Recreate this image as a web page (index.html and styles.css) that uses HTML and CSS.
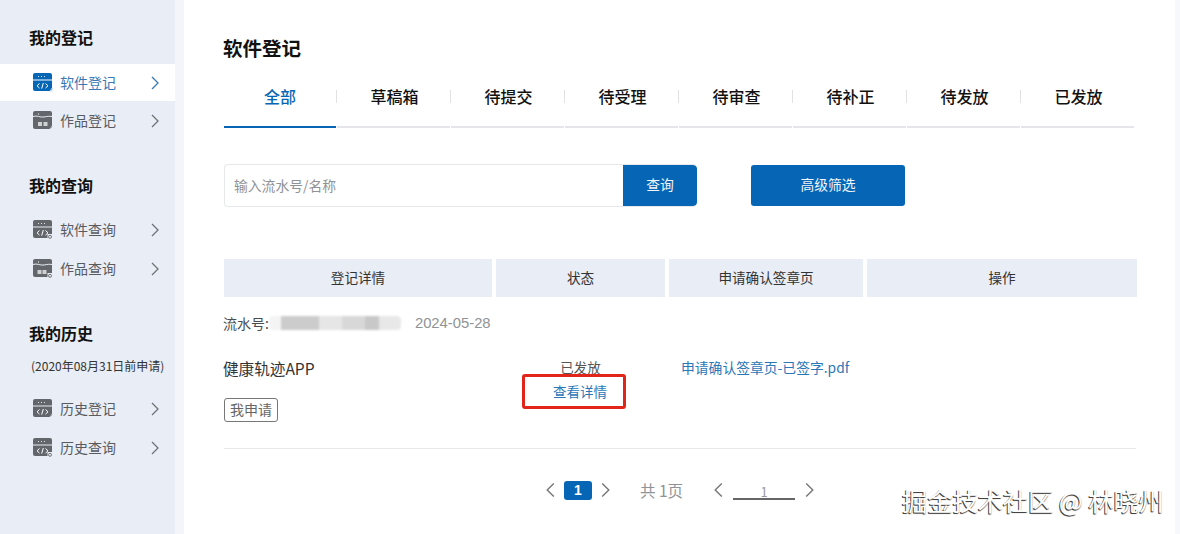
FILE: index.html
```html
<!DOCTYPE html>
<html lang="zh">
<head>
<meta charset="utf-8">
<title>软件登记</title>
<link rel="stylesheet" href="styles.css">
</head>
<body>
<svg class="defs" width="0" height="0" aria-hidden="true">
  <symbol id="win-code" viewBox="0 0 20 19">
    <path d="M2 0h15a2 2 0 0 1 2 2v4.500H0V2a2 2 0 0 1 2-2z" fill="currentColor"/>
    <path d="M0 7.500h19V16a2 2 0 0 1-2 2H2a2 2 0 0 1-2-2z" fill="currentColor"/>
    <path d="M5 3.500h1M8 3.500h1M11 3.500h1" stroke="#fff" stroke-width="1" opacity=".8"/>
    <path d="M6.500 10.500 4 12.800l2.500 2.300M12.500 10.500l2.500 2.300-2.500 2.300M10.300 10l-1.600 5.600" fill="none" stroke="#fff" stroke-width="1"/>
    <path d="M15.500 19.500h4.500V15h-1.500z" fill="#e8edf6"/>
    <path d="M17 17.500l1.800-1.800" stroke="currentColor" stroke-width="1"/>
  </symbol>
  <symbol id="win-code-q" viewBox="0 0 20 19">
    <path d="M2 0h15a2 2 0 0 1 2 2v4.500H0V2a2 2 0 0 1 2-2z" fill="currentColor"/>
    <path d="M0 7.500h19V16a2 2 0 0 1-2 2H2a2 2 0 0 1-2-2z" fill="currentColor"/>
    <path d="M5 3.500h1M8 3.500h1M11 3.500h1" stroke="#fff" stroke-width="1" opacity=".8"/>
    <path d="M6.500 10.500 4 12.800l2.500 2.300M12.500 10.500l2.500 2.300-2.500 2.300M10.300 10l-1.600 5.600" fill="none" stroke="#fff" stroke-width="1"/>
    <path d="M14.500 19.500H20V14h-5.500z" fill="#e8edf6"/>
    <circle cx="17" cy="16.800" r="1.500" fill="none" stroke="currentColor" stroke-width=".9"/>
  </symbol>
  <symbol id="win-work" viewBox="0 0 20 19">
    <path d="M2 0h15a2 2 0 0 1 2 2v14a2 2 0 0 1-2 2H2a2 2 0 0 1-2-2V2a2 2 0 0 1 2-2z" fill="currentColor"/>
    <path d="M0 5.500c4-1.500 7 1.200 11 .5s5-1 8-.5" fill="none" stroke="#e8edf6" stroke-width="1"/>
    <path d="M5 3h1" stroke="#fff" stroke-width="1"/>
    <path d="M5 11h4v4H5zM10.500 11h4v4h-4z" fill="#fff" opacity=".7"/>
    <path d="M15.500 19.500h4.500V15h-1.500z" fill="#e8edf6"/>
    <path d="M17 17.500l1.800-1.800" stroke="currentColor" stroke-width="1"/>
  </symbol>
  <symbol id="win-work-q" viewBox="0 0 20 19">
    <path d="M2 0h15a2 2 0 0 1 2 2v14a2 2 0 0 1-2 2H2a2 2 0 0 1-2-2V2a2 2 0 0 1 2-2z" fill="currentColor"/>
    <path d="M0 5.500c4-1.500 7 1.200 11 .5s5-1 8-.5" fill="none" stroke="#e8edf6" stroke-width="1"/>
    <path d="M5 3h1" stroke="#fff" stroke-width="1"/>
    <path d="M4.500 11h4v4h-4zM9.500 11h4v4h-4z" fill="#fff" opacity=".7"/>
    <path d="M14.500 19.500H20V14h-5.500z" fill="#e8edf6"/>
    <circle cx="17" cy="16.800" r="1.500" fill="none" stroke="currentColor" stroke-width=".9"/>
  </symbol>
  <symbol id="chev-r" viewBox="0 0 10 14">
    <path d="M2 1l6 6-6 6" fill="none" stroke="currentColor" stroke-width="1.300"/>
  </symbol>
  <symbol id="chev-l" viewBox="0 0 10 14">
    <path d="M8 1 2 7l6 6" fill="none" stroke="currentColor" stroke-width="1.300"/>
  </symbol>
</svg>
<div class="app">
  <aside class="sidebar">
    <h2 class="side-title first">我的登记</h2>
    <a class="nav-item active"><svg class="nav-icon"><use href="#win-code"/></svg><span class="nav-label">软件登记</span><svg class="nav-chev"><use href="#chev-r"/></svg></a>
    <a class="nav-item"><svg class="nav-icon"><use href="#win-work"/></svg><span class="nav-label">作品登记</span><svg class="nav-chev"><use href="#chev-r"/></svg></a>
    <h2 class="side-title">我的查询</h2>
    <a class="nav-item"><svg class="nav-icon"><use href="#win-code-q"/></svg><span class="nav-label">软件查询</span><svg class="nav-chev"><use href="#chev-r"/></svg></a>
    <a class="nav-item"><svg class="nav-icon"><use href="#win-work-q"/></svg><span class="nav-label">作品查询</span><svg class="nav-chev"><use href="#chev-r"/></svg></a>
    <h2 class="side-title">我的历史</h2>
    <p class="side-note">(2020年08月31日前申请)</p>
    <a class="nav-item"><svg class="nav-icon"><use href="#win-code"/></svg><span class="nav-label">历史登记</span><svg class="nav-chev"><use href="#chev-r"/></svg></a>
    <a class="nav-item"><svg class="nav-icon"><use href="#win-code-q"/></svg><span class="nav-label">历史查询</span><svg class="nav-chev"><use href="#chev-r"/></svg></a>
  </aside>
  <div class="side-shadow"></div>
  <main class="main">
    <h1 class="page-title">软件登记</h1>
    <nav class="tabs">
      <a class="tab active">全部</a>
      <a class="tab">草稿箱</a>
      <a class="tab">待提交</a>
      <a class="tab">待受理</a>
      <a class="tab">待审查</a>
      <a class="tab">待补正</a>
      <a class="tab">待发放</a>
      <a class="tab">已发放</a>
    </nav>
    <div class="filters">
      <div class="search">
        <span class="search-input">输入流水号/名称</span>
        <button class="search-btn">查询</button>
      </div>
      <button class="adv-btn">高级筛选</button>
    </div>
    <div class="thead">
      <div class="th">登记详情</div>
      <div class="th">状态</div>
      <div class="th">申请确认签章页</div>
      <div class="th">操作</div>
    </div>
    <div class="serial">
      <span>流水号:</span><span class="blurred"></span><span class="date">2024-05-28</span>
    </div>
    <div class="row">
      <div class="cell-detail">
        <div class="app-name">健康轨迹APP</div>
        <span class="tag">我申请</span>
      </div>
      <div class="cell-status">
        <div class="status-text">已发放</div>
        <a class="detail-link">查看详情</a>
      </div>
      <a class="pdf-link">申请确认签章页-已签字.pdf</a>
    </div>
    <div class="pager">
      <svg class="pg-chev"><use href="#chev-l"/></svg>
      <span class="pg-num">1</span>
      <svg class="pg-chev"><use href="#chev-r"/></svg>
      <span class="pg-total">共 1页</span>
      <svg class="pg-chev"><use href="#chev-l"/></svg>
      <span class="pg-input">1</span>
      <svg class="pg-chev"><use href="#chev-r"/></svg>
    </div>
  </main>
</div>
<div class="watermark">掘金技术社区 @ 林晓州</div>
</body>
</html>
```

FILE: styles.css
```css
* { box-sizing: border-box; }
html, body { margin: 0; height: 534px; overflow: hidden; background: #fff; }
body { font-family: "Noto Sans CJK SC", "Liberation Sans", sans-serif; color: #222; position: relative; }
.defs { position: absolute; }
.app { display: flex; height: 534px; }

.sidebar { width: 175px; background: #e8edf6; flex: none; }
.side-shadow { width: 9px; flex: none; background: #f3f5fa; }
.side-title { margin: 34px 0 0 29px; height: 24px; font-size: 16px; line-height: 24px; font-weight: 700; color: #111; }
.side-title.first { margin-top: 25px; }
.nav-item { display: flex; align-items: center; height: 37px; margin-top: 2px; padding-left: 33px; color: #595b5f; font-size: 14px; }
.nav-item.active + .nav-item { margin-top: 1px; }
.side-title + .nav-item { margin-top: 14px; }
.side-title.first + .nav-item { margin-top: 15px; }
.nav-item.active { background: #fff; color: #3a78b5; }
.nav-icon { width: 20px; height: 19px; flex: none; color: #63666b; }
.nav-item.active .nav-icon { color: #0666b5; }
.nav-label { margin: 0 0 2px 7px; width: 57px; line-height: 20px; white-space: nowrap; }
.nav-chev { width: 10px; height: 14px; margin-left: 33px; color: #6f7378; }
.nav-item.active .nav-chev { color: #3a78b5; }
.side-note { margin: 11px 0 0 31px; font-size: 12px; line-height: 20px; color: #333; white-space: nowrap; }
.side-note + .nav-item { margin-top: 14px; }

.main { flex: 1; padding: 0; margin-left: 40px; min-width: 0; border-right: 5px solid #f7f8fb; }
.page-title { margin: 34px 0 0 -1px; font-size: 19.500px; line-height: 28px; font-weight: 700; color: #111; }
.tabs { display: flex; width: 912px; margin-top: 13px; }
.tab { position: relative; width: 113px; height: 53px; margin-right: 1px; padding-left: 2px; line-height: 42px; text-align: center; font-size: 16px; font-weight: 500; color: #111; border-bottom: 2px solid #e4e6e9; }
.tab:first-child { width: 112px; padding-left: 0; }
.tab::after { content: ""; position: absolute; right: -1px; top: 15px; width: 1px; height: 13px; background: #dfe1e4; }
.tab:last-child::after { display: none; }
.tab.active { color: #0666b5; border-bottom-color: #0666b5; }

.filters { display: flex; align-items: center; margin-top: 36px; }
.search { display: flex; width: 473px; height: 43px; border: 1px solid #e6e8eb; border-right: 0; border-radius: 4px; overflow: hidden; }
.search-input { flex: 1; padding-left: 9px; line-height: 40px; font-size: 13.800px; color: #8f9296; }
.search-btn { width: 74px; border: 0; padding: 0 0 3px; background: #0666b5; color: #f2f6fa; font: inherit; font-size: 13.800px; border-radius: 0 4px 4px 0; }
.adv-btn { width: 154px; height: 41px; margin-left: 54px; border: 0; padding: 0 0 3px; border-radius: 3px; background: #0666b5; color: #f2f6fa; font: inherit; font-size: 13.800px; }

.thead { display: grid; grid-template-columns: 268px 169px 194px 270px; gap: 4px; margin-top: 52px; width: 913px; }
.th { height: 38px; line-height: 36px; background: #e8edf6; text-align: center; font-size: 13.600px; color: #333; }

.serial { display: flex; align-items: center; height: 20px; margin: 16px 0 0 -1px; font-size: 14px; color: #4a4c50; }
.blurred { width: 132px; height: 14px; margin-left: 0; border-radius: 4px; filter: blur(.8px); background: linear-gradient(90deg, #f4f4f4 0 9%, #cccccc 9% 38%, #e6e6e6 38% 55%, #d8d8d8 55% 73%, #c8c8c8 73% 83%, #e8e8e8 83% 100%); }
.date { margin-left: 14px; font-family: "Liberation Sans", sans-serif; font-size: 14.800px; color: #8f9296; }

.row { display: flex; align-items: flex-start; width: 912px; height: 114px; margin-top: 2px; border-bottom: 1px solid #e6e8eb; padding-top: 21px; }
.cell-detail { width: 272px; }
.app-name { margin-left: -1px; font-size: 15.600px; line-height: 24px; color: #333; }
.tag { display: inline-block; margin-top: 18px; height: 24px; padding: 0 5px; line-height: 21px; font-size: 14px; color: #666; border: 1px solid #777; border-radius: 3px; }
.cell-status { width: 169px; display: flex; flex-direction: column; align-items: center; }
.status-text { font-size: 13.500px; line-height: 20px; margin-top: 1px; color: #555; }
.detail-link { flex: none; width: 104px; height: 35px; margin: -3px 0 0 -13px; padding-left: 12px; border: 3px solid #e1251b; border-radius: 3px; text-align: center; line-height: 28px; font-size: 13.500px; color: #2a77b8; }
.pdf-link { margin: 1px 0 0 16px; font-size: 13.800px; line-height: 20px; color: #2a77b8; white-space: nowrap; }

.pager { display: flex; align-items: center; width: 912px; height: 20px; margin-top: 31px; padding-left: 321px; font-size: 15.500px; color: #8f9296; }
.pg-chev { width: 11px; height: 16px; color: #777; flex: none; }
.pg-num { width: 28px; height: 19px; margin: 0 8px; background: #0666b5; border-radius: 3px; color: #fff; text-align: center; line-height: 19px; font-family: "Liberation Sans", sans-serif; font-weight: 700; font-size: 14px; }
.pg-total { width: 73px; margin-left: 29px; white-space: nowrap; }
.pg-input { width: 62px; height: 20px; margin: 0 9px; border-bottom: 2px solid #666; text-align: center; font-size: 13px; line-height: 24px; color: #999; }

.watermark { position: absolute; left: 902px; top: 485px; font-size: 25.200px; line-height: 30px; color: #fff; white-space: nowrap; text-shadow: -1px 1px 0 #444, 0 1px 1px #777; }
```
